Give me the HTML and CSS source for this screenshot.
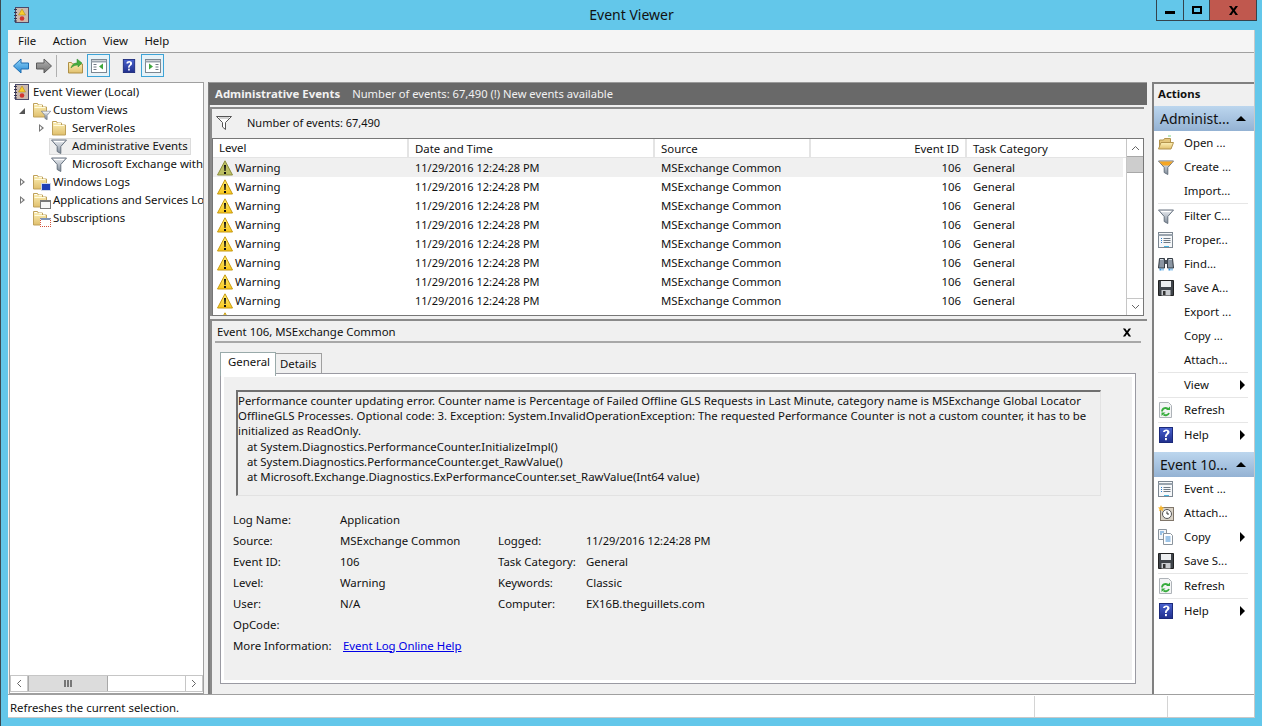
FILE: index.html
```html
<!DOCTYPE html>
<html lang="en">
<head>
<meta charset="utf-8">
<title>Event Viewer</title>
<link rel="stylesheet" href="styles.css">
</head>
<body>
<svg class="defs" width="0" height="0" aria-hidden="true">
  <defs>
    <linearGradient id="gf" x1="0" y1="0" x2="0" y2="1"><stop offset="0" stop-color="#fdf1b8"/><stop offset="1" stop-color="#e0bf6c"/></linearGradient>
    <linearGradient id="gh" x1="0" y1="0" x2="0" y2="1"><stop offset="0" stop-color="#eef0f4"/><stop offset="1" stop-color="#7f8b99"/></linearGradient>
    <linearGradient id="gy" x1="0" y1="0" x2="0" y2="1"><stop offset="0" stop-color="#fff27a"/><stop offset="1" stop-color="#f7c51c"/></linearGradient>
    <linearGradient id="gb" x1="0" y1="0" x2="0" y2="1"><stop offset="0" stop-color="#4a63d0"/><stop offset="1" stop-color="#202f8c"/></linearGradient>
    <linearGradient id="gl" x1="0" y1="0" x2="0" y2="1"><stop offset="0" stop-color="#8fd3f8"/><stop offset="1" stop-color="#2588d4"/></linearGradient>
    <linearGradient id="gg" x1="0" y1="0" x2="0" y2="1"><stop offset="0" stop-color="#b5b5b5"/><stop offset="1" stop-color="#6f6f6f"/></linearGradient>
    <symbol id="funnel" viewBox="0 0 16 16"><path d="M.5 2h15L9.800 8.500V15.500L6.200 13.500V8.500z" fill="url(#gh)" stroke="#66717e"/><path d="M3 3.500h10" stroke="#fff"/></symbol>
    <symbol id="folder" viewBox="0 0 16 16"><path d="M1.500 15V1.500h4l1 1.500h4v2h4V15z" fill="url(#gf)" stroke="#bfa15a"/><path d="M6.500 3.500h3.500M2.500 5.500h11" stroke="#fffbe0"/><path d="M2.500 2.500h2.500" stroke="#fff"/></symbol>
    <symbol id="warn" viewBox="0 0 16 16"><path d="M8 .8 15.500 15H.5z" fill="url(#gy)" stroke="#c79a12" stroke-linejoin="round"/><path d="M7 5h2l-.4 6h-1.200zM7 12h2v2H7z" fill="#111"/></symbol>
    <symbol id="warn-sel" viewBox="0 0 16 16"><path d="M8 .8 15.500 15H.5z" fill="#bcbf63" stroke="#8c8d3e" stroke-linejoin="round"/><path d="M7 5h2l-.4 6h-1.200zM7 12h2v2H7z" fill="#111"/></symbol>
    <symbol id="help" viewBox="0 0 16 16"><rect x="1.500" y=".5" width="13" height="15" fill="url(#gb)" stroke="#1c2a7a"/><path d="M5 5c0-3.500 6.500-3.500 6.500 0 0 2.500-2.800 2.300-2.800 5H7C7 6.500 9.200 6.800 9.200 5c0-1.400-2-1.400-2-0z" fill="#fff"/><rect x="7" y="11" width="1.900" height="2.200" fill="#fff"/></symbol>
    <symbol id="refresh" viewBox="0 0 16 16"><path d="M1.500.5h9l3 3v12h-12z" fill="#f3f4f5" stroke="#aeb3b8"/><path d="M4 9.500a3.600 3.600 0 0 1 6.500-2" fill="none" stroke="#37ac3c" stroke-width="1.800"/><path d="M11 11a3.600 3.600 0 0 1-5.500 1.500" fill="none" stroke="#37ac3c" stroke-width="1.800"/><path d="M8 8h4V4.500zM7.500 10.500h-4V14z" fill="#37ac3c"/></symbol>
    <symbol id="props" viewBox="0 0 16 16"><rect x=".5" y=".5" width="14" height="15" fill="#f6f8fa" stroke="#7d8791"/><path d="M.5 3h14" stroke="#9aa4ae" stroke-width="2"/><path d="M3 6.500h1M3 8.500h1M3 10.500h1" stroke="#2b7fd0"/><path d="M5.500 6.500h7M5.500 8.500h7M5.500 10.500h7" stroke="#707a84"/><path d="M6 14.500h5" stroke="#48b4e0"/></symbol>
    <symbol id="save" viewBox="0 0 16 16"><path d="M.5.5h15v15H.5z" fill="#3f444a" stroke="#222"/><rect x="3" y="1" width="10" height="6" fill="#eceef0"/><rect x="3.500" y="10" width="9" height="5.500" fill="#c9ccd0"/><rect x="5" y="11" width="2.500" height="4" fill="#333"/></symbol>
    <symbol id="bino" viewBox="0 0 16 16"><path d="M1.500 2.500h5V12H.5zM9.500 2.500h5l1 9.500h-6z" fill="#8a95a2" stroke="#333a42"/><rect x="6.500" y="4" width="3" height="4" fill="#49525c"/><path d="M2 3.500h3M11 3.500h3" stroke="#d5dbe2"/><path d="M1.500 13.500h4M10.500 13.500h4" stroke="#3a97e0" stroke-width="2" stroke-dasharray="2 1"/></symbol>
    <symbol id="openf" viewBox="0 0 16 16"><path d="M1.500 14V5h4l1-1.500h6V7" fill="#e3c67c" stroke="#b3944e"/><path d="M.5 14 3 7.500h12.500L13 14z" fill="url(#gf)" stroke="#b3944e"/><path d="M10 1h3" stroke="#7fd08a"/></symbol>
    <symbol id="copy" viewBox="0 0 16 16"><path d="M.5.5h8v10h-8z" fill="#f4f6f8" stroke="#8b949d"/><path d="M5.500 4.500h7l2 2v9h-9z" fill="#fff" stroke="#8b949d"/><path d="M2 3h4M2 5h2M7.500 8h5M7.500 10h5M7.500 12h5" stroke="#3c8bd2"/></symbol>
    <symbol id="clock" viewBox="0 0 16 16"><rect x="2.500" y="2.500" width="13" height="13" fill="#d9d2c6" stroke="#80766a"/><circle cx="9" cy="9" r="4.500" fill="#fff" stroke="#555"/><path d="M9 6.500V9h2" fill="none" stroke="#333"/><path d="m3 0 1 2.200 2.300.3-1.700 1.500.5 2.300L3 5 1 6.300l.5-2.300L0 2.500l2-.3z" fill="#f8b832"/></symbol>
    <symbol id="app" viewBox="0 0 16 16"><rect x="2.500" y=".5" width="13" height="15" fill="#cbb9ae" stroke="#4a4a6a"/><path d="M1 2.500h3M1 5.500h3M1 8.500h3M1 11.500h3M1 14h3" stroke="#34344f"/><path d="M9 2 12.500 8h-7z" fill="#f8ce2d" stroke="#a37e10" stroke-width=".5"/><circle cx="9" cy="11.500" r="2.300" fill="#d1362f"/></symbol>
  </defs>
</svg>

<div class="window">
  <header class="titlebar">
    <svg class="app-icon" width="16" height="16"><use href="#app"/></svg>
    <div class="title">Event Viewer</div>
    <div class="win-buttons">
      <div class="win-btn min"><span class="min-bar"></span></div>
      <div class="win-btn max"><span class="max-box"></span></div>
      <div class="win-btn close"><svg width="11" height="9" viewBox="0 0 11 9"><path d="M1 0h2.500l2 2.800L7.500 0H10L6.800 4.400 10 9H7.500l-2-2.900L3.500 9H1l3.200-4.600z" fill="#000"/></svg></div>
    </div>
  </header>

  <div class="client">
    <nav class="menubar"><span>File</span><span>Action</span><span>View</span><span>Help</span></nav>
    <div class="toolbar">
      <svg class="tool back" width="16" height="16" viewBox="0 0 16 16"><path d="M.5 8 8 1v4h7.500v6H8v4z" fill="url(#gl)" stroke="#1f6db0"/></svg>
      <svg class="tool fwd" width="16" height="16" viewBox="0 0 16 16"><path d="M15.500 8 8 1v4H.5v6H8v4z" fill="url(#gg)" stroke="#5a5a5a"/></svg>
      <span class="tool-sep"></span>
      <svg class="tool up" width="15" height="16" viewBox="0 0 15 16"><path d="M.5 15V4.500h3l1 1.500h10v9z" fill="url(#gf)" stroke="#ae8f45"/><path d="M3 10c1-4 4-5 6-5V1l5 4-4 4V7c-3 0-5 1-7 3z" fill="#45ad3f" stroke="#2f8a2c" stroke-width=".5"/></svg>
      <span class="tool-box"><svg width="16" height="14" viewBox="0 0 16 14"><rect x=".5" y=".5" width="15" height="13" fill="#fff" stroke="#7d8791"/><path d="M.5 2.500h15" stroke="#9aa4ae" stroke-width="2"/><path d="M2.500 5.500h3M2.500 8h3M2.500 10.500h3" stroke="#707a84"/><path d="M12 4.500v6L8 7.500z" fill="#3fa63c"/></svg></span>
      <svg class="tool help-tool" width="14" height="16"><use href="#help"/></svg>
      <span class="tool-box"><svg width="16" height="14" viewBox="0 0 16 14"><rect x=".5" y=".5" width="15" height="13" fill="#fff" stroke="#7d8791"/><path d="M.5 2.500h15" stroke="#9aa4ae" stroke-width="2"/><path d="M10.500 5.500h3M10.500 8h3M10.500 10.500h3" stroke="#707a84"/><path d="M4 4.500v6l4-3z" fill="#3fa63c"/></svg></span>
    </div>

    <div class="panes">
      <aside class="tree-pane">
        <div class="tree">
          <div class="node lvl0"><svg class="ico" width="16" height="16"><use href="#app"/></svg><span>Event Viewer (Local)</span></div>
          <div class="node lvl1"><i class="arrow open"></i><span class="ico-wrap"><svg class="ico" width="16" height="16"><use href="#folder"/></svg><svg class="badge" width="10" height="10"><use href="#funnel"/></svg></span><span>Custom Views</span></div>
          <div class="node lvl2"><i class="arrow"></i><svg class="ico" width="16" height="16"><use href="#folder"/></svg><span>ServerRoles</span></div>
          <div class="node lvl2"><i class="arrow none"></i><span class="selected"><svg class="ico" width="16" height="16"><use href="#funnel"/></svg><span>Administrative Events</span></span></div>
          <div class="node lvl2"><i class="arrow none"></i><svg class="ico" width="16" height="16"><use href="#funnel"/></svg><span>Microsoft Exchange with</span></div>
          <div class="node lvl1"><i class="arrow"></i><span class="ico-wrap"><svg class="ico" width="16" height="16"><use href="#folder"/></svg><i class="badge-logs"></i></span><span>Windows Logs</span></div>
          <div class="node lvl1"><i class="arrow"></i><span class="ico-wrap"><svg class="ico" width="16" height="16"><use href="#folder"/></svg><i class="badge-apps"></i></span><span>Applications and Services Lo</span></div>
          <div class="node lvl1"><i class="arrow none"></i><span class="ico-wrap"><svg class="ico" width="16" height="16"><use href="#folder"/></svg><i class="badge-subs"></i></span><span>Subscriptions</span></div>
        </div>
        <div class="hscroll">
          <span class="sbtn"><svg width="6" height="9" viewBox="0 0 6 9"><path d="M5 1 1.500 4.500 5 8" fill="none" stroke="#666"/></svg></span>
          <span class="hthumb"><svg width="8" height="7" viewBox="0 0 8 7"><path d="M1 0v7M4 0v7M7 0v7" stroke="#555" stroke-width="1.500"/></svg></span>
          <span class="htrack"></span>
          <span class="sbtn end"><svg width="6" height="9" viewBox="0 0 6 9"><path d="M1 1l3.500 3.500L1 8" fill="none" stroke="#666"/></svg></span>
        </div>
      </aside>

      <main class="center">
        <div class="center-head"><b>Administrative Events</b><span>Number of events: 67,490 (!) New events available</span></div>
        <section class="list-pane">
          <div class="filter-row">
            <svg width="16" height="14" viewBox="0 0 16 14"><path d="M.5.500h15L9.500 6.500v7L6.500 11V6.500z" fill="#fff" stroke="#555"/><path d="M3 2h10" stroke="#aaa"/></svg>
            <span>Number of events: 67,490</span>
          </div>
          <div class="list-wrap">
            <div class="list-main">
              <div class="row head">
                <span class="c-level">Level</span><span class="c-date">Date and Time</span><span class="c-source">Source</span><span class="c-id">Event ID</span><span class="c-cat">Task Category</span>
              </div>
              <div class="rows">
                <div class="row sel"><span class="c-level"><svg width="16" height="16"><use href="#warn-sel"/></svg>Warning</span><span class="c-date">11/29/2016 12:24:28 PM</span><span class="c-source">MSExchange Common</span><span class="c-id">106</span><span class="c-cat">General</span></div>
                <div class="row"><span class="c-level"><svg width="16" height="16"><use href="#warn"/></svg>Warning</span><span class="c-date">11/29/2016 12:24:28 PM</span><span class="c-source">MSExchange Common</span><span class="c-id">106</span><span class="c-cat">General</span></div>
                <div class="row"><span class="c-level"><svg width="16" height="16"><use href="#warn"/></svg>Warning</span><span class="c-date">11/29/2016 12:24:28 PM</span><span class="c-source">MSExchange Common</span><span class="c-id">106</span><span class="c-cat">General</span></div>
                <div class="row"><span class="c-level"><svg width="16" height="16"><use href="#warn"/></svg>Warning</span><span class="c-date">11/29/2016 12:24:28 PM</span><span class="c-source">MSExchange Common</span><span class="c-id">106</span><span class="c-cat">General</span></div>
                <div class="row"><span class="c-level"><svg width="16" height="16"><use href="#warn"/></svg>Warning</span><span class="c-date">11/29/2016 12:24:28 PM</span><span class="c-source">MSExchange Common</span><span class="c-id">106</span><span class="c-cat">General</span></div>
                <div class="row"><span class="c-level"><svg width="16" height="16"><use href="#warn"/></svg>Warning</span><span class="c-date">11/29/2016 12:24:28 PM</span><span class="c-source">MSExchange Common</span><span class="c-id">106</span><span class="c-cat">General</span></div>
                <div class="row"><span class="c-level"><svg width="16" height="16"><use href="#warn"/></svg>Warning</span><span class="c-date">11/29/2016 12:24:28 PM</span><span class="c-source">MSExchange Common</span><span class="c-id">106</span><span class="c-cat">General</span></div>
                <div class="row"><span class="c-level"><svg width="16" height="16"><use href="#warn"/></svg>Warning</span><span class="c-date">11/29/2016 12:24:28 PM</span><span class="c-source">MSExchange Common</span><span class="c-id">106</span><span class="c-cat">General</span></div>
                <div class="row partial"><span class="c-level"><svg width="16" height="16"><use href="#warn"/></svg></span></div>
              </div>
            </div>
            <div class="vscroll">
              <span class="vbtn"><svg width="9" height="6" viewBox="0 0 9 6"><path d="M1 5l3.500-3.500L8 5" fill="none" stroke="#666"/></svg></span>
              <span class="vthumb"></span>
              <span class="vtrack"></span>
              <span class="vbtn"><svg width="9" height="6" viewBox="0 0 9 6"><path d="M1 1l3.500 3.500L8 1" fill="none" stroke="#666"/></svg></span>
            </div>
          </div>
        </section>

        <section class="detail-pane">
          <div class="detail-head"><span>Event 106, MSExchange Common</span><svg class="detail-x" width="10" height="9" viewBox="0 0 11 9"><path d="M1 0h2.500l2 2.800L7.500 0H10L6.800 4.400 10 9H7.500l-2-2.900L3.500 9H1l3.200-4.600z" fill="#000"/></svg></div>
          <div class="tabs"><span class="tab active">General</span><span class="tab">Details</span></div>
          <div class="tab-body">
            <div class="message">Performance counter updating error. Counter name is Percentage of Failed Offline GLS Requests in Last Minute, category name is MSExchange Global Locator OfflineGLS Processes. Optional code: 3. Exception: System.InvalidOperationException: The requested Performance Counter is not a custom counter, it has to be initialized as ReadOnly.
   at System.Diagnostics.PerformanceCounter.InitializeImpl()
   at System.Diagnostics.PerformanceCounter.get_RawValue()
   at Microsoft.Exchange.Diagnostics.ExPerformanceCounter.set_RawValue(Int64 value)</div>
            <div class="props">
              <span class="k">Log Name:</span><span class="v full">Application</span>
              <span class="k">Source:</span><span class="v">MSExchange Common</span><span class="k2">Logged:</span><span class="v2 digits">11/29/2016 12:24:28 PM</span>
              <span class="k">Event ID:</span><span class="v">106</span><span class="k2">Task Category:</span><span class="v2">General</span>
              <span class="k">Level:</span><span class="v">Warning</span><span class="k2">Keywords:</span><span class="v2">Classic</span>
              <span class="k">User:</span><span class="v">N/A</span><span class="k2">Computer:</span><span class="v2">EX16B.theguillets.com</span>
              <span class="k">OpCode:</span><span class="v full"></span>
              <span class="k">More Information:</span><a class="v full link" href="#">Event Log Online Help</a>
            </div>
          </div>
        </section>
      </main>

      <aside class="actions">
        <div class="actions-title">Actions</div>
        <div class="group-head"><span>Administ...</span><i class="tri-up"></i></div>
        <ul class="action-list first">
          <li><svg width="16" height="16"><use href="#openf"/></svg><span>Open ...</span></li>
          <li><svg width="16" height="16" viewBox="0 0 16 16"><path d="M.5 2h15L9.800 8.500v7l-3.600-2v-5z" fill="url(#gh)" stroke="#66717e"/><path d="M1 2.500h14L11 6.500H5z" fill="#f5a623"/></svg><span>Create ...</span></li>
          <li class="rule"><span class="blank"></span><span>Import...</span></li>
          <li><svg width="16" height="16"><use href="#funnel"/></svg><span>Filter C...</span></li>
          <li><svg width="16" height="16"><use href="#props"/></svg><span>Proper...</span></li>
          <li><svg width="16" height="16"><use href="#bino"/></svg><span>Find...</span></li>
          <li><svg width="16" height="16"><use href="#save"/></svg><span>Save A...</span></li>
          <li><span class="blank"></span><span>Export ...</span></li>
          <li><span class="blank"></span><span>Copy ...</span></li>
          <li class="rule"><span class="blank"></span><span>Attach...</span></li>
          <li class="rule"><span class="blank"></span><span>View</span><i class="tri-right"></i></li>
          <li class="rule"><svg width="16" height="16"><use href="#refresh"/></svg><span>Refresh</span></li>
          <li class="last"><svg width="16" height="16"><use href="#help"/></svg><span>Help</span><i class="tri-right"></i></li>
        </ul>
        <div class="group-head"><span>Event 10...</span><i class="tri-up"></i></div>
        <ul class="action-list">
          <li><svg width="16" height="16"><use href="#props"/></svg><span>Event ...</span></li>
          <li><svg width="16" height="16"><use href="#clock"/></svg><span>Attach...</span></li>
          <li><svg width="16" height="16"><use href="#copy"/></svg><span>Copy</span><i class="tri-right"></i></li>
          <li class="rule"><svg width="16" height="16"><use href="#save"/></svg><span>Save S...</span></li>
          <li class="rule"><svg width="16" height="16"><use href="#refresh"/></svg><span>Refresh</span></li>
          <li class="last"><svg width="16" height="16"><use href="#help"/></svg><span>Help</span><i class="tri-right"></i></li>
        </ul>
      </aside>
    </div>

    <footer class="statusbar"><span class="st-main">Refreshes the current selection.</span><span class="st-a"></span><span class="st-b"></span></footer>
  </div>
</div>
</body>
</html>
```

FILE: styles.css
```css
* { box-sizing: border-box; }
html, body { margin: 0; height: 100%; overflow: hidden; }
body { background: #63c7ea; font: 11.4px/16px "Noto Sans", "Open Sans", sans-serif; color: #111; }
.defs { position: absolute; }
.window { width: 1262px; height: 726px; background: #63c7ea; border-left: 1px solid #3c4a52; display: flex; flex-direction: column; padding: 0 7px 8px 7px; }

.titlebar { height: 30px; display: flex; align-items: flex-start; flex: none; margin-left: 5px; }
.app-icon { margin-top: 7px; flex: none; }
.title { flex: 1; text-align: center; font-size: 14px; line-height: 18px; padding-top: 6px; padding-left: 78px; color: #111; }
.win-buttons { display: flex; height: 21px; margin-right: -2px; border: 1px solid #34434c; border-top: 0; }
.win-btn { height: 20px; display: flex; align-items: center; justify-content: center; }
.min { width: 27px; border-right: 1px solid #34434c; }
.max { width: 26px; border-right: 1px solid #34434c; }
.close { width: 46px; background: #c0584e; }
.min-bar { width: 10px; height: 3px; background: #000; margin-top: 4px; }
.max-box { width: 10px; height: 8px; border: 2px solid #000; }

.client { flex: 1; min-height: 0; display: flex; flex-direction: column; background: #f0f0f0; border: 1px solid #c9c9c9; border-width: 0 1px 1px 0; }
.menubar { height: 23px; flex: none; display: flex; gap: 16.500px; padding: 3px 0 0 10px; background: #f5f5f5; border-bottom: 1px solid #a0a0a0; }
.toolbar { height: 29px; flex: none; display: flex; align-items: center; padding: 0 0 4px 5px; background: #f0f0f0; }
.tool { flex: none; display: block; }
.back { margin-right: 7px; }
.fwd { margin-right: 4px; }
.tool-sep { width: 1px; height: 22px; background: #b0b0b0; flex: none; }
.tool.up { margin: 0 4px 0 11px; }
.tool.help-tool { margin: 0 5px 0 12px; }
.tool-box { width: 23px; height: 23px; flex: none; display: flex; align-items: center; justify-content: center; border: 1px solid #3da3d6; background: #e6f2f8; }

.panes { flex: 1; min-height: 0; display: flex; padding-left: 1px; }
.tree-pane { width: 195px; flex: none; background: #fff; border: 1px solid #a0a0a0; display: flex; flex-direction: column; }
.tree { flex: 1; overflow: hidden; white-space: nowrap; }
.node { height: 18px; display: flex; align-items: center; }
.node > span:last-child { margin-left: 5px; }
.lvl0 { padding-left: 3px; }
.lvl0 > span:last-child { margin-left: 4px; }
.lvl1 { padding-left: 8px; }
.lvl2 { padding-left: 27px; }
.arrow { flex: none; width: 9px; height: 9px; margin-right: 5px; position: relative; }
.arrow::before { content: ""; position: absolute; left: 2px; top: 0; border-left: 5px solid #777; border-top: 4px solid transparent; border-bottom: 4px solid transparent; }
.arrow::after { content: ""; position: absolute; left: 3px; top: 2px; border-left: 2.500px solid #fff; border-top: 2px solid transparent; border-bottom: 2px solid transparent; }
.arrow.open::before { left: 1px; top: 2px; border: 0; width: 0; height: 0; border-bottom: 6px solid #555; border-left: 6px solid transparent; }
.arrow.open::after { display: none; }
.arrow.none::before, .arrow.none::after { display: none; }
.ico { flex: none; display: block; }
.ico-wrap { position: relative; width: 16px; height: 16px; flex: none; }
.badge { position: absolute; right: -3px; bottom: -2px; }
.badge-logs { position: absolute; right: -3px; bottom: -1px; width: 10px; height: 8px; background: #1f3fb5; border: 1px solid #d0d8e8; }
.badge-apps { position: absolute; right: -3px; bottom: -1px; width: 11px; height: 9px; background: #f6f6f6; border: 1px solid #777; border-top-width: 2px; }
.badge-subs { position: absolute; right: -3px; bottom: -1px; width: 11px; height: 9px; background: #fff; border: 1px dotted #d5543c; border-top: 2px solid #7f95b8; }
.node > span.selected:last-child { display: flex; align-items: center; height: 17px; margin-left: -2px; padding: 0 3px 0 2px; background: #f0f0f0; outline: 1px solid #dcdcdc; outline-offset: -1px; }
.selected span { margin-left: 5px; }
.hscroll { height: 17px; flex: none; display: flex; border: 1px solid #c6c6c6; margin: 0 0 1px 0; }
.sbtn { width: 17px; flex: none; background: #fff; display: flex; align-items: center; justify-content: center; border-right: 1px solid #c6c6c6; }
.sbtn.end { border-right: 0; border-left: 1px solid #c6c6c6; }
.hthumb { width: 80px; flex: none; background: #dcdcdc; border: 1px solid #a8a8a8; border-width: 0 1px; display: flex; align-items: center; justify-content: center; }
.htrack { flex: 1; background: #fff; }

.center { width: 939px; flex: none; margin-left: 4px; display: flex; flex-direction: column; border-left: 2px solid #7d7d7d; min-width: 0; }
.center-head { height: 23px; flex: none; background: #696969; color: #f2f2f2; display: flex; gap: 12px; padding: 3px 0 0 6px; margin-left: -1px; border-top: 1px solid #9a9a9a; }
.center-head b { font-weight: 700; }
.center-head span { font-size: 11.2px; }
.list-pane { height: 209px; flex: none; margin: 2px 3px 0 0; border: 2px solid #8a8a8a; border-width: 2px 0 0 2px; }
.filter-row { height: 29px; display: flex; align-items: center; gap: 15px; padding: 0 0 1px 4px; background: #f0f0f0; font-size: 11px; }
.list-wrap { height: 178px; display: flex; border: 1px solid #777; background: #fff; }
.list-main { flex: 1; min-width: 0; overflow: hidden; }
.row { display: flex; width: max-content; height: 19px; align-items: center; white-space: nowrap; }
.row.head { width: auto; border-bottom: 1px solid #e4e4e4; }
.row.head span { border-right: 2px solid #e4e4e4; height: 18px; line-height: 20px; }
.row.head .c-level { padding-left: 6px; }
.row.sel { background: #f0f0f0; }
.rows { height: 158px; overflow: hidden; }
.rows .c-date, .digits { font-size: 11px; }
.c-level { width: 196px; flex: none; padding-left: 4px; display: flex; align-items: center; gap: 2px; }
.c-date { width: 246px; flex: none; padding-left: 6px; }
.c-source { width: 156px; flex: none; padding-left: 6px; }
.c-id { width: 156px; flex: none; text-align: right; padding-right: 6px; }
.c-cat { width: 156px; flex: none; padding-left: 6px; }
.row.head .c-cat { border-right: 0; }
.vscroll { width: 17px; flex: none; display: flex; flex-direction: column; border-left: 1px solid #c6c6c6; }
.vbtn { height: 17px; flex: none; display: flex; align-items: center; justify-content: center; }
.vbtn:last-child { border-top: 1px solid #c6c6c6; }
.vthumb { height: 17px; flex: none; background: #cdcdcd; border: 1px solid #a8a8a8; border-width: 1px 0; }
.vtrack { flex: 1; }

.detail-pane { flex: 1; min-height: 0; margin-top: 3px; border: 2px solid #8a8a8a; border-width: 2px 0 0 2px; padding: 0 6px 0 3px; display: flex; flex-direction: column; background: #f0f0f0; }
.detail-head { height: 22px; flex: none; display: flex; justify-content: space-between; align-items: center; border-bottom: 2px solid #a8a8a8; padding: 2px 0 0 2px; }
.detail-x { flex: none; margin-right: 9px; }
.tabs { height: 21px; flex: none; display: flex; align-items: flex-start; margin: 9px 0 0 5px; position: relative; z-index: 1; }
.tab { height: 20px; margin-top: 1px; padding: 2px 4px 0; background: #f0f0f0; border: 1px solid #a0a0a0; border-bottom: 0; }
.tab.active { width: 56px; height: 24px; margin-top: 0; padding: 1px 0 0 7px; background: #fff; border-color: #9aa; z-index: 1; }
.tab.active + .tab { border-left: 0; }
.tab-body { height: 311px; flex: none; margin: 0 5px; background: #f0f0f0; border: 1px solid #9a9aa2; box-shadow: inset 0 0 0 3px #fff; padding: 16px 34px 0 15px; display: flex; flex-direction: column; }
.message { height: 106px; flex: none; background: #efefef; border: 1px solid #e2e2e2; border-top: 2px solid #707070; border-left: 2px solid #707070; padding: 1px 0 0 0; line-height: 15.200px; white-space: pre-wrap; }
.props { display: grid; grid-template-columns: 107px 158px 88px 1fr; grid-auto-rows: 21px; margin-top: 13px; margin-left: -3px; align-items: center; }
.k { grid-column: 1; }
.v { grid-column: 2; }
.k2 { grid-column: 3; }
.v2 { grid-column: 4; }
.full { grid-column: 2 / -1; }
.link { color: #0000e6; text-decoration: underline; margin-left: 3px; }

.actions { width: 102px; flex: none; margin-left: 5px; border: 2px solid #808080; border-width: 2px 0 0 2px; background: #fff; }
.actions-title { height: 22px; background: #f0f0f0; font-weight: 700; padding: 2px 0 0 4px; }
.group-head { height: 25px; background: linear-gradient(#bcd6ee, #94b2d3); display: flex; align-items: center; padding-left: 6px; font-size: 14px; }
.group-head span { flex: 1; }
.tri-up { width: 0; height: 0; flex: none; border-left: 5px solid transparent; border-right: 5px solid transparent; border-bottom: 5px solid #000; margin-right: 8px; }
.action-list { list-style: none; margin: 0; padding: 0; }
.action-list.first { margin-bottom: 4px; }
.action-list li { height: 24px; display: flex; align-items: center; padding-left: 4px; position: relative; }
.action-list li svg, .blank { width: 16px; height: 16px; flex: none; margin-right: 10px; }
.action-list li span:not(.blank) { flex: 1; }
.action-list li.rule { height: 25px; padding-bottom: 1px; }
.action-list li.rule::after { content: ""; position: absolute; left: 4px; right: 6px; bottom: 0; height: 1px; background: #e6e6e6; }
.action-list li.last { height: 25px; padding-bottom: 1px; }
.tri-right { width: 0; height: 0; flex: none; border-left: 5px solid #000; border-top: 5px solid transparent; border-bottom: 5px solid transparent; margin-right: 9px; }

.statusbar { height: 23px; flex: none; display: flex; background: #fff; border-top: 1px solid #a0a0a0; line-height: 23px; padding-top: 1px; }
.st-main { width: 1026px; padding-left: 2px; }
.st-a { width: 133px; border-left: 1px solid #d4d4d4; }
.st-b { flex: 1; border-left: 1px solid #d4d4d4; }
```
